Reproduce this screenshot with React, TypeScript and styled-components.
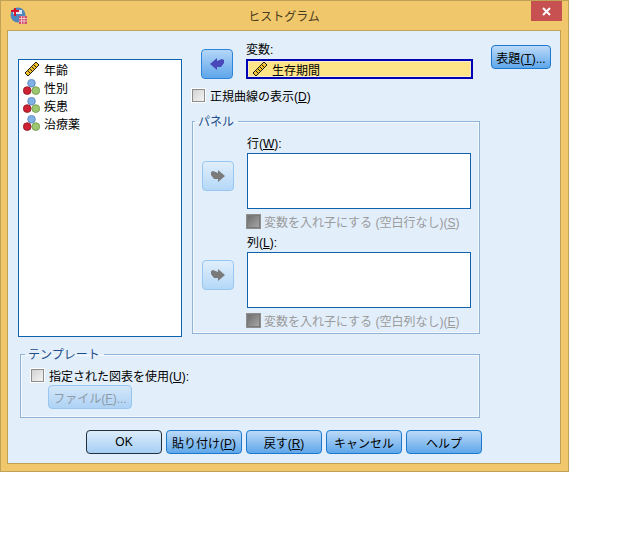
import React from 'react';
import styled, { createGlobalStyle } from 'styled-components';

const GlobalStyle = createGlobalStyle`
  html, body {
    margin: 0;
    padding: 0;
    background: #ffffff;
  }
  body {
    font-family: "Liberation Sans", "Noto Sans CJK JP", sans-serif;
    font-size: 12px;
    color: #000000;
  }
`;

const RulerIcon = () => (
  <svg width="16" height="16" viewBox="0 0 16 16">
    <path d="M1 12 L12 1 L15 4 L4 15 Z" fill="#f5c22a" stroke="#1a1a1a" strokeWidth="1" />
    <path d="M4 10 L6 12 M6 8 L8 10 M8 6 L10 8 M10 4 L12 6" stroke="#1a1a1a" strokeWidth="1" />
  </svg>
);

const BallsIcon = () => (
  <svg width="17" height="16" viewBox="0 0 17 16">
    <circle cx="8.5" cy="4.2" r="3.8" fill="#7fb0e6" stroke="#4f7fb8" strokeWidth="0.8" />
    <circle cx="4.2" cy="11.6" r="3.9" fill="#cc2233" stroke="#8e1622" strokeWidth="0.8" />
    <circle cx="12.8" cy="11.6" r="3.9" fill="#9cc66f" stroke="#6b9446" strokeWidth="0.8" />
  </svg>
);

const ArrowIcon = ({ left, color }: { left?: boolean; color: string }) => (
  <svg width="16" height="14" viewBox="0 0 16 14" style={{ transform: left ? 'scaleX(-1)' : undefined }}>
    <path d="M1 3 L3 2 L8 4 L8 1 L15 7 L8 13 L8 10 L4 10 L1 6 Z" fill={color} />
  </svg>
);

const AppIcon = () => (
  <svg width="17" height="17" viewBox="0 0 17 17">
    <circle cx="8" cy="8" r="7.5" fill="#4f86bd" />
    <path d="M3 3 H12 V7 H3 Z" fill="#dbe8f4" />
    <path d="M5 1 V9 M1 4 H9" stroke="#d8142c" strokeWidth="2" />
    <rect x="9" y="9" width="8" height="8" fill="#d0506a" />
    <path d="M9 11.5 H17 M9 14 H17 M11.5 9 V17 M14 9 V17" stroke="#f4d4dc" strokeWidth="0.8" />
  </svg>
);

const CloseIcon = () => (
  <svg width="9" height="9" viewBox="0 0 9 9">
    <path d="M1 1 L8 8 M8 1 L1 8" stroke="#ffffff" strokeWidth="2" />
  </svg>
);

const Window = styled.div`
  box-sizing: border-box;
  width: 569px;
  height: 472px;
  background: #f0c86b;
  border: 1px solid #c0a257;
  display: flex;
  flex-direction: column;
  padding: 0 7px 7px 6px;
`;

const TitleBar = styled.div`
  height: 29px;
  flex-shrink: 0;
  display: flex;
  align-items: flex-start;
  justify-content: space-between;
`;

const AppIconSlot = styled.div`
  margin: 6px 0 0 3px;
  height: 17px;
`;

const Title = styled.div`
  flex: 1;
  text-align: center;
  font-size: 12px;
  line-height: 32px;
  color: #4a3c20;
  padding-left: 10px;
`;

const CloseButton = styled.div`
  width: 31px;
  height: 20px;
  background: #c75050;
  margin-right: -1px;
  display: flex;
  align-items: center;
  justify-content: center;
`;

const Client = styled.div`
  flex: 1;
  background: #e2eefa;
  border: 1px solid #c0a257;
  padding: 28px 9px 0 10px;
  display: flex;
  flex-direction: column;
`;

const TopRow = styled.div`
  display: flex;
  align-items: flex-start;
`;

const VarList = styled.div`
  box-sizing: border-box;
  width: 164px;
  height: 278px;
  background: #ffffff;
  border: 1px solid #0f62ae;
  padding: 0 0 0 4px;
  flex-shrink: 0;
`;

const VarRow = styled.div`
  display: flex;
  align-items: center;
  gap: 4px;
  height: 18px;
`;

const VarIcon = styled.div`
  width: 17px;
  height: 16px;
  display: flex;
  justify-content: center;
`;

const Center = styled.div`
  width: 288px;
  margin: -10px 0 0 10px;
  flex-shrink: 0;
`;

const TargetRow = styled.div`
  display: flex;
  height: 30px;
  padding-left: 9px;
`;

const ArrowButton = styled.div<{ $active?: boolean }>`
  box-sizing: border-box;
  width: 32px;
  height: 30px;
  border-radius: 4px;
  border: 1px solid ${(p) => (p.$active ? '#2a86da' : '#97c6f0')};
  background: ${(p) =>
    p.$active
      ? 'linear-gradient(#b4d6f8, #5ea6ea)'
      : 'linear-gradient(#e0eefb, #b4d8f8)'};
  display: flex;
  align-items: center;
  justify-content: center;
  flex-shrink: 0;
`;

const TargetColumn = styled.div`
  margin-left: 13px;
  width: 227px;
`;

const FieldLabel = styled.div`
  height: 16px;
  line-height: 14px;
  margin-top: -6px;
`;

const TargetField = styled.div`
  box-sizing: border-box;
  height: 20px;
  border: 2px solid #0000b4;
  background: #ffe487;
  box-shadow: inset 0 0 0 1px #f4eecb;
  display: flex;
  align-items: center;
  gap: 4px;
  padding-left: 4px;
`;

const CheckRow = styled.label<{ $disabled?: boolean }>`
  display: flex;
  align-items: center;
  gap: 5px;
  height: 16px;
  color: ${(p) => (p.$disabled ? '#9a9a9a' : '#000000')};
`;

const NormalRow = styled(CheckRow)`
  margin-top: 8px;
`;

const CheckBox = styled.span<{ $disabled?: boolean }>`
  box-sizing: border-box;
  width: 13px;
  height: 13px;
  flex-shrink: 0;
  border: 1px solid ${(p) => (p.$disabled ? '#7a7a7a' : '#8c8c8c')};
  outline: 1px solid ${(p) => (p.$disabled ? '#8e8e8e' : '#ffffff')};
  background: ${(p) =>
    p.$disabled ? 'linear-gradient(135deg, #6f6f6f, #a5a5a5)' : 'linear-gradient(135deg, #d2d2d2, #f4f4f4)'};
`;

const Group = styled.fieldset`
  box-sizing: border-box;
  margin: 0;
  min-width: 0;
  border: 1px solid #8fb4d6;
  box-shadow: 0 0 0 1px #f4f9fe inset;
  padding: 0;
`;

const Legend = styled.legend<{ $indent: number }>`
  padding: 2px 4px 0 3px;
  margin-left: ${(p) => p.$indent}px;
  line-height: 14px;
  color: #1f4f8c;
  font-size: 12px;
`;

const PanelGroup = styled(Group)`
  margin-top: 10px;
  height: 221px;
`;

const PanelBody = styled.div`
  padding: 11px 0 0 9px;
`;

const PanelBlock = styled.div`
  display: flex;
  align-items: flex-start;
`;

const PanelButtonSlot = styled.div`
  padding-top: 21px;
`;

const PanelColumn = styled.div`
  margin-left: 13px;
  width: 224px;
`;

const BoxLabel = styled.div`
  height: 13px;
  line-height: 9px;
`;

const DropBox = styled.div`
  box-sizing: border-box;
  height: 56px;
  background: #ffffff;
  border: 1px solid #0f62ae;
`;

const NestRow = styled(CheckRow)`
  margin: 4px 0 10px 0;
  white-space: nowrap;
  gap: 4px;
`;

const Side = styled.div`
  margin: -14px 0 0 11px;
`;

const Button = styled.div<{ $default?: boolean; $disabled?: boolean }>`
  box-sizing: border-box;
  width: 76px;
  height: 24px;
  border-radius: 4px;
  border: 1px solid ${(p) => (p.$default ? '#22303c' : p.$disabled ? '#97c6f0' : '#1b78cc')};
  background: ${(p) =>
    p.$default
      ? 'linear-gradient(#dcecfb, #a6cef4)'
      : p.$disabled
        ? 'linear-gradient(#d4e7fa, #aed2f5)'
        : 'linear-gradient(#bcdaf8, #5fa7ea)'};
  color: ${(p) => (p.$disabled ? '#8d9aa6' : '#000000')};
  display: flex;
  align-items: center;
  justify-content: center;
  white-space: nowrap;
`;

const TitleButton = styled(Button)`
  width: 60px;
`;

const TemplateGroup = styled(Group)`
  width: 460px;
  height: 72px;
  margin: 9px 0 0 2px;
`;

const TemplateBody = styled.div`
  padding: 5px 0 0 10px;
`;

const FileButton = styled(Button)`
  width: 84px;
  margin: 2px 0 0 17px;
`;

const ButtonBar = styled.div`
  display: flex;
  gap: 4px;
  margin: 12px 0 0 68px;
`;

const Key = styled.span`
  text-decoration: underline;
`;

const variables = [
  { name: '年齢', scale: true },
  { name: '性別', scale: false },
  { name: '疾患', scale: false },
  { name: '治療薬', scale: false },
];

const App: React.FC = () => {
  return (
    <>
      <GlobalStyle />
      <Window>
        <TitleBar>
          <AppIconSlot>
            <AppIcon />
          </AppIconSlot>
          <Title>ヒストグラム</Title>
          <CloseButton>
            <CloseIcon />
          </CloseButton>
        </TitleBar>
        <Client>
          <TopRow>
            <VarList>
              {variables.map((v) => (
                <VarRow key={v.name}>
                  <VarIcon>{v.scale ? <RulerIcon /> : <BallsIcon />}</VarIcon>
                  {v.name}
                </VarRow>
              ))}
            </VarList>
            <Center>
              <TargetRow>
                <ArrowButton $active>
                  <ArrowIcon left color="#4848b8" />
                </ArrowButton>
                <TargetColumn>
                  <FieldLabel>変数:</FieldLabel>
                  <TargetField>
                    <RulerIcon />
                    生存期間
                  </TargetField>
                </TargetColumn>
              </TargetRow>
              <NormalRow>
                <CheckBox />
                <span>
                  正規曲線の表示(<Key>D</Key>)
                </span>
              </NormalRow>
              <PanelGroup>
                <Legend $indent={2}>パネル</Legend>
                <PanelBody>
                  <PanelBlock>
                    <PanelButtonSlot>
                      <ArrowButton>
                        <ArrowIcon color="#7a7a7a" />
                      </ArrowButton>
                    </PanelButtonSlot>
                    <PanelColumn>
                      <BoxLabel>
                        行(<Key>W</Key>):
                      </BoxLabel>
                      <DropBox />
                      <NestRow $disabled>
                        <CheckBox $disabled />
                        <span>
                          変数を入れ子にする (空白行なし)(<Key>S</Key>)
                        </span>
                      </NestRow>
                    </PanelColumn>
                  </PanelBlock>
                  <PanelBlock>
                    <PanelButtonSlot>
                      <ArrowButton>
                        <ArrowIcon color="#7a7a7a" />
                      </ArrowButton>
                    </PanelButtonSlot>
                    <PanelColumn>
                      <BoxLabel>
                        列(<Key>L</Key>):
                      </BoxLabel>
                      <DropBox />
                      <NestRow $disabled>
                        <CheckBox $disabled />
                        <span>
                          変数を入れ子にする (空白列なし)(<Key>E</Key>)
                        </span>
                      </NestRow>
                    </PanelColumn>
                  </PanelBlock>
                </PanelBody>
              </PanelGroup>
            </Center>
            <Side>
              <TitleButton>
                <span>
                  表題(<Key>T</Key>)...
                </span>
              </TitleButton>
            </Side>
          </TopRow>
          <TemplateGroup>
            <Legend $indent={4}>テンプレート</Legend>
            <TemplateBody>
              <CheckRow>
                <CheckBox />
                <span>
                  指定された図表を使用(<Key>U</Key>):
                </span>
              </CheckRow>
              <FileButton $disabled>
                <span>
                  ファイル(<Key>F</Key>)...
                </span>
              </FileButton>
            </TemplateBody>
          </TemplateGroup>
          <ButtonBar>
            <Button $default>OK</Button>
            <Button>
              <span>
                貼り付け(<Key>P</Key>)
              </span>
            </Button>
            <Button>
              <span>
                戻す(<Key>R</Key>)
              </span>
            </Button>
            <Button>キャンセル</Button>
            <Button>ヘルプ</Button>
          </ButtonBar>
        </Client>
      </Window>
    </>
  );
};

export default App;
